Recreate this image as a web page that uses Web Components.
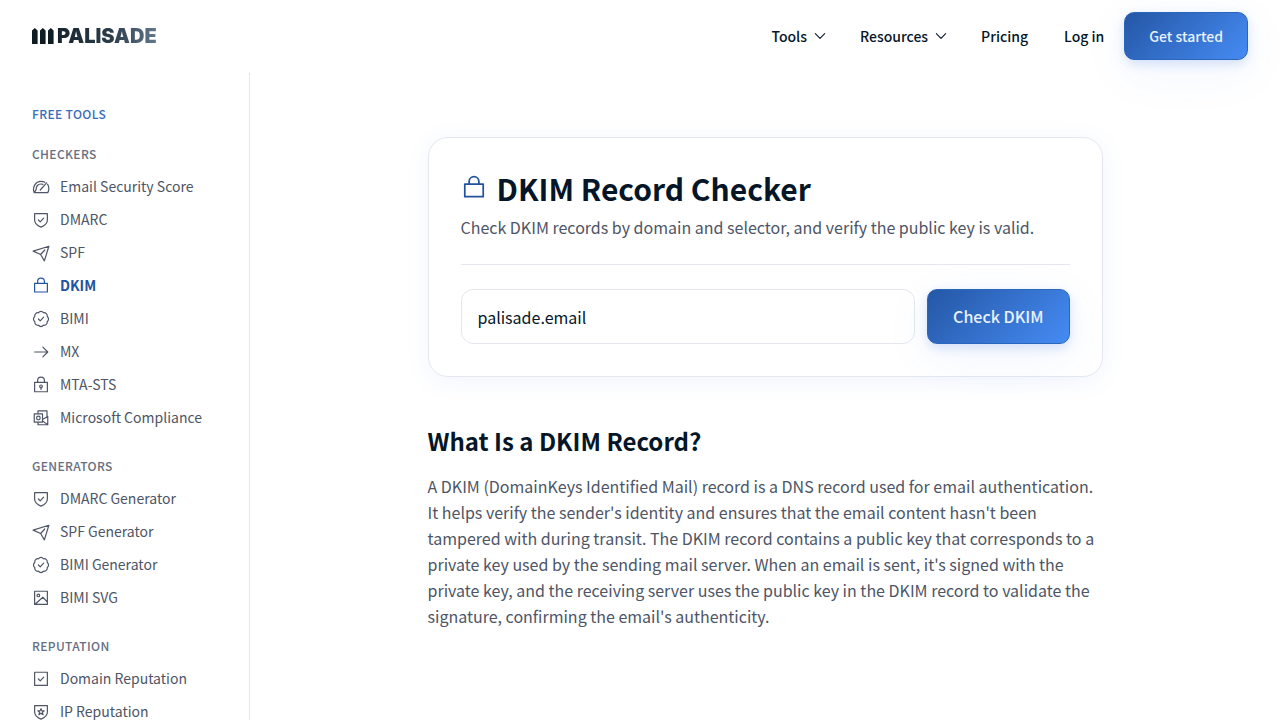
<!DOCTYPE html>
<html lang="en">
<head>
<meta charset="utf-8">
<meta name="viewport" content="width=device-width, initial-scale=1">
<title>DKIM Record Checker</title>
<style>
:root {
  --ink: #061629;
  --muted: #4d5566;
  --label: #666e80;
  --blue: #2353a0;
  --line: #e4e8ee;
}
body {
  margin: 0;
  font-family: "Noto Sans CJK SC", "Noto Sans", sans-serif;
  color: var(--ink);
  background: #fff;
}
</style>
</head>
<body>
<palisade-page>
  <site-header slot="header">
    <nav-item menu>Tools</nav-item>
    <nav-item menu>Resources</nav-item>
    <nav-item href="#pricing">Pricing</nav-item>
    <nav-item href="#login">Log in</nav-item>
    <cta-button slot="action">Get started</cta-button>
  </site-header>

  <tool-sidebar slot="sidebar" heading="Free tools">
    <tool-group heading="Checkers">
      <tool-link icon="gauge">Email Security Score</tool-link>
      <tool-link icon="shield">DMARC</tool-link>
      <tool-link icon="send">SPF</tool-link>
      <tool-link icon="lock" current>DKIM</tool-link>
      <tool-link icon="badge">BIMI</tool-link>
      <tool-link icon="arrow">MX</tool-link>
      <tool-link icon="keyhole">MTA-STS</tool-link>
      <tool-link icon="outlook">Microsoft Compliance</tool-link>
    </tool-group>
    <tool-group heading="Generators">
      <tool-link icon="shield">DMARC Generator</tool-link>
      <tool-link icon="send">SPF Generator</tool-link>
      <tool-link icon="badge">BIMI Generator</tool-link>
      <tool-link icon="image">BIMI SVG</tool-link>
    </tool-group>
    <tool-group heading="Reputation">
      <tool-link icon="check">Domain Reputation</tool-link>
      <tool-link icon="star">IP Reputation</tool-link>
    </tool-group>
  </tool-sidebar>

  <checker-card icon="lock" heading="DKIM Record Checker" action="Check DKIM" value="palisade.email">
    Check DKIM records by domain and selector, and verify the public key is valid.
  </checker-card>
  <article-section heading="What Is a DKIM Record?">
    A DKIM (DomainKeys Identified Mail) record is a DNS record used for email authentication. It helps verify the sender's identity and ensures that the email content hasn't been tampered with during transit. The DKIM record contains a public key that corresponds to a private key used by the sending mail server. When an email is sent, it's signed with the private key, and the receiving server uses the public key in the DKIM record to validate the signature, confirming the email's authenticity.
  </article-section>
</palisade-page>

<script>
const shield = '<path d="M3.5 3.5h17V12c0 4.500-3.500 7.500-8.500 9.500C7 19.500 3.500 16.500 3.500 12z"/>';

const ICONS = {
  gauge: '<path d="M3 19.500C0 13 4.500 4.500 12 4.500c2 0 3.500.4 5 1.300M20.800 8.500c2.200 3.500 2 7.500.2 11H3M5.500 15.500C5.500 11 8 8 12 8c1 0 1.800.2 2.500.5M11 16l8.500-9.500M3 19.500l2.500-4"/>',
  shield: shield + '<path d="m8.500 12 2.500 2.500 4.500-5"/>',
  send: '<path d="M1.500 9.500 22.500 3l-6 19.500-5-8.500zM11.500 14l5.500-6"/>',
  lock: '<path d="M3.500 8.500h17V20h-17zM7.500 8.500V6a4.500 4.500 0 0 1 9 0v2.500"/>',
  badge: '<path d="M8.600 3.700a4.200 4.200 0 0 1 6.800 0 4.200 4.200 0 0 1 4.900 4.900 4.200 4.200 0 0 1 0 6.800 4.200 4.200 0 0 1-4.900 4.900 4.200 4.200 0 0 1-6.800 0 4.200 4.200 0 0 1-4.900-4.900 4.200 4.200 0 0 1 0-6.800 4.200 4.200 0 0 1 4.900-4.900z"/><path d="m8.500 12 2.500 2.500 4.500-5"/>',
  arrow: '<path d="M3.500 12H21M14.500 5.500 21 12l-6.500 6.500"/>',
  keyhole: '<path d="M3.500 8.500h17V21h-17zM7.500 8.500V6a4.500 4.500 0 0 1 9 0v2.500M12 15.500V18"/><circle cx="12" cy="13.800" r="1.800"/>',
  outlook: '<path d="M3 6.500h11v11H3zM8 6.500v-4h12v8M14 14l7-4v11H8v-3.500M14 16l6.500 4.500"/><circle cx="8.500" cy="12" r="2.400"/>',
  image: '<path d="M3.500 3h17v17.500h-17zM4.500 20l10-9 6 6.500"/><circle cx="8.500" cy="8.500" r="1.800"/>',
  check: '<path d="M3.500 3h17v17.500h-17zM8.500 12l2.500 2.500 4.500-5"/>',
  star: shield + '<path d="m12 7.500 1.200 3h3l-2.400 2 1 3.200-2.800-1.900-2.800 1.900 1-3.200-2.400-2h3z"/>',
  chevron: '<path d="m5 8.500 7 7 7-7"/>',
};

function icon(name) {
  return `<svg viewBox="0 0 24 24" fill="none" stroke="currentColor" stroke-width="1.6" stroke-linejoin="round" stroke-linecap="round" aria-hidden="true">${ICONS[name]}</svg>`;
}

class BaseElement extends HTMLElement {
  connectedCallback() {
    if (this.shadowRoot) return;
    this.attachShadow({ mode: 'open' });
    this.shadowRoot.innerHTML = `<style>*, :host { box-sizing: border-box; } ${this.styles()}</style>${this.markup()}`;
  }
}

class PalisadePage extends BaseElement {
  styles() {
    return `
      :host { display: flex; flex-direction: column; height: 100vh; overflow: hidden; }
      .body { display: flex; flex: 1; min-height: 0; }
      main { flex: 1; padding: 64px 32px; }
      .column { display: flex; flex-direction: column; gap: 47px; max-width: 675px; margin: 0 auto; }
    `;
  }

  markup() {
    return `
      <slot name="header"></slot>
      <div class="body">
        <slot name="sidebar"></slot>
        <main><div class="column"><slot></slot></div></main>
      </div>
    `;
  }
}

class SiteHeader extends BaseElement {
  styles() {
    return `
      :host { display: block; }
      header { display: flex; align-items: center; justify-content: space-between; padding: 12px 32px 13px; }
      .logo { display: flex; align-items: center; gap: 2px; text-decoration: none; }
      .logo svg { width: 23px; height: 16px; fill: #101c24; }
      .logo span {
        font: 900 20px/24px Inter, sans-serif;
        color: transparent;
        background: linear-gradient(90deg, #17242e, #2c3d4b 55%, #64788c);
        -webkit-background-clip: text;
        background-clip: text;
      }
      .right { display: flex; align-items: center; gap: 20px; }
      nav { display: flex; align-items: center; gap: 36px; }
    `;
  }

  markup() {
    return `
      <header>
        <a class="logo" href="#home">
          <svg viewBox="0 0 23 16" aria-hidden="true"><path d="M0 16V2.500L2.800 0l2.800 2.500V16zM8 16V2.500L10.800 0l2.800 2.500V16zM16 16V2.500L18.800 0l2.800 2.500V16z"/></svg>
          <span>PALISADE</span>
        </a>
        <div class="right">
          <nav><slot></slot></nav>
          <slot name="action"></slot>
        </div>
      </header>
    `;
  }
}

class NavItem extends BaseElement {
  styles() {
    return `
      :host { display: block; }
      a, button {
        display: flex; align-items: center; gap: 5px; padding: 0; border: 0; background: none;
        font: 500 14px/24px "Noto Sans CJK SC", sans-serif;
        color: var(--ink); text-decoration: none; cursor: pointer;
      }
      svg { width: 16px; height: 16px; margin-right: -4px; }
    `;
  }

  markup() {
    if (this.hasAttribute('menu')) {
      return `<button type="button" aria-haspopup="true"><slot></slot>${icon('chevron')}</button>`;
    }
    return `<a href="${this.getAttribute('href')}"><slot></slot></a>`;
  }
}

class CtaButton extends BaseElement {
  styles() {
    return `
      :host { display: block; }
      button {
        padding: 11px 24px; border: 1px solid #2b66bd; border-radius: 10px;
        font: 500 14px/24px "Noto Sans CJK SC", sans-serif;
        color: #e9f2ff; cursor: pointer;
        background: linear-gradient(135deg, #2456a4, #468cf5) border-box;
        box-shadow: 0 4px 12px rgba(60, 120, 230, .2), 0 12px 48px rgba(60, 120, 230, .07);
      }
      :host([large]) button { padding: 14px 25px; font-size: 16px; line-height: 25px; }
    `;
  }

  markup() {
    return '<button type="button"><slot></slot></button>';
  }
}

class ToolSidebar extends BaseElement {
  styles() {
    return `
      :host { display: block; flex: none; width: 250px; overflow: hidden; border-right: 1px solid var(--line); }
      nav { display: flex; flex-direction: column; gap: 22px; padding: 31px 32px; }
      h2 { margin: 0 0 -2px; font-size: 12px; line-height: 20px; font-weight: 500; letter-spacing: 0.03em; text-transform: uppercase; color: #366db9; }
    `;
  }

  markup() {
    const heading = this.getAttribute('heading');
    return `<nav aria-label="${heading}"><h2>${heading}</h2><slot></slot></nav>`;
  }
}

class ToolGroup extends BaseElement {
  styles() {
    return `
      :host { display: block; }
      h3 { margin: 0 0 6px; font-size: 12px; line-height: 20px; font-weight: 500; letter-spacing: 0.03em; text-transform: uppercase; color: var(--label); }
    `;
  }

  markup() {
    return `<h3>${this.getAttribute('heading')}</h3><slot></slot>`;
  }
}

class ToolLink extends BaseElement {
  styles() {
    return `
      :host { display: block; }
      a { display: flex; align-items: center; gap: 10px; font-size: 14px; line-height: 33px; white-space: nowrap; color: var(--muted); text-decoration: none; }
      svg { flex: none; width: 18px; height: 18px; }
      :host([current]) a { color: var(--blue); font-weight: 700; }
    `;
  }

  markup() {
    const current = this.hasAttribute('current') ? ' aria-current="page"' : '';
    return `<a href="#tool"${current}>${icon(this.getAttribute('icon'))}<slot></slot></a>`;
  }
}

class CheckerCard extends BaseElement {
  styles() {
    return `
      :host {
        display: block; padding: 32px; border: 1px solid var(--line); border-radius: 20px; background: #fff;
        box-shadow: 0 4px 24px rgba(60, 120, 230, .08);
      }
      .title { display: flex; align-items: center; gap: 10px; }
      .title svg { width: 26px; height: 26px; color: var(--blue); }
      h1 { margin: 0; font-size: 30px; line-height: 36px; font-weight: 700; }
      p { margin: 8px 0 0; padding-bottom: 24px; border-bottom: 1px solid var(--line); font-size: 16px; line-height: 26px; color: var(--muted); }
      form { display: flex; gap: 12px; margin-top: 24px; }
      input {
        flex: 1; min-width: 0; padding: 0 16px; border: 1px solid var(--line); border-radius: 12px; background: #fff;
        font: 400 16px/26px "Noto Sans CJK SC", sans-serif; color: var(--ink);
      }
    `;
  }

  markup() {
    return `
      <div class="title">${icon(this.getAttribute('icon'))}<h1>${this.getAttribute('heading')}</h1></div>
      <p><slot></slot></p>
      <form>
        <input type="text" name="domain" aria-label="Domain" value="${this.getAttribute('value')}">
        <cta-button large>${this.getAttribute('action')}</cta-button>
      </form>
    `;
  }
}

class ArticleSection extends BaseElement {
  styles() {
    return `
      :host { display: block; }
      h2 { margin: 0 0 15px; font-size: 24px; line-height: 34px; font-weight: 700; }
      p { margin: 0; font-size: 16px; line-height: 26px; color: var(--muted); }
    `;
  }

  markup() {
    return `<h2>${this.getAttribute('heading')}</h2><p><slot></slot></p>`;
  }
}

customElements.define('palisade-page', PalisadePage);
customElements.define('site-header', SiteHeader);
customElements.define('nav-item', NavItem);
customElements.define('cta-button', CtaButton);
customElements.define('tool-sidebar', ToolSidebar);
customElements.define('tool-group', ToolGroup);
customElements.define('tool-link', ToolLink);
customElements.define('checker-card', CheckerCard);
customElements.define('article-section', ArticleSection);
</script>
</body>
</html>
